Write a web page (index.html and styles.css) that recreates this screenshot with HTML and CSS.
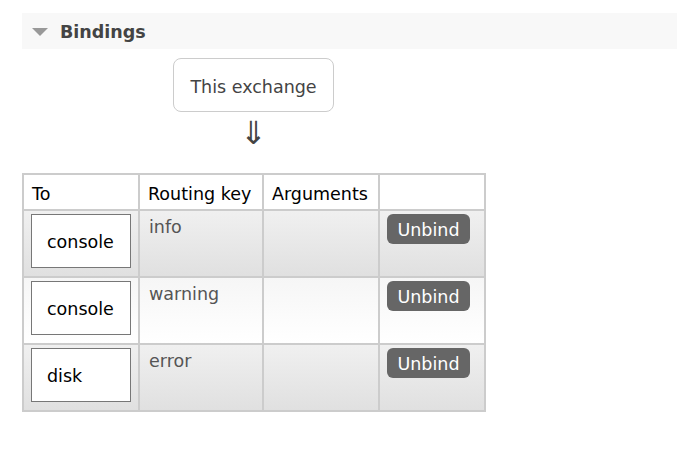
FILE: index.html
```html
<!DOCTYPE html>
<html>
<head>
<meta charset="utf-8">
<link rel="stylesheet" href="styles.css">
</head>
<body>
<div class="section">
  <h2 class="section-title"><span class="toggle"></span><span class="title-text">Bindings</span></h2>
  <div class="source">
    <div class="exchange-box">This exchange</div>
    <div class="arrow">&#8659;</div>
  </div>
  <table class="list">
    <thead>
      <tr>
        <th class="c-to">To</th>
        <th class="c-key">Routing key</th>
        <th class="c-args">Arguments</th>
        <th class="c-act"></th>
      </tr>
    </thead>
    <tbody>
      <tr class="alt1">
        <td><div class="queue-box">console</div></td>
        <td class="key">info</td>
        <td></td>
        <td><button class="btn">Unbind</button></td>
      </tr>
      <tr class="alt2">
        <td><div class="queue-box">console</div></td>
        <td class="key">warning</td>
        <td></td>
        <td><button class="btn">Unbind</button></td>
      </tr>
      <tr class="alt1">
        <td><div class="queue-box">disk</div></td>
        <td class="key">error</td>
        <td></td>
        <td><button class="btn">Unbind</button></td>
      </tr>
    </tbody>
  </table>
</div>
</body>
</html>
```

FILE: styles.css
```css
html, body {
  margin: 0;
  padding: 0;
  background: #fff;
}
body {
  font-family: "DejaVu Sans", Verdana, sans-serif;
  font-size: 17.5px;
  color: #000;
}
.section {
  padding: 13px 0 0 22px;
}
.section-title {
  margin: 0;
  height: 36px;
  background: #f8f8f8;
  display: flex;
  align-items: center;
  font-size: 17.5px;
  font-weight: bold;
  color: #444;
  padding-left: 10px;
}
.title-text {
  padding-top: 2px;
}
.toggle {
  width: 0;
  height: 0;
  border-left: 8px solid transparent;
  border-right: 8px solid transparent;
  border-top: 8px solid #999;
  margin-right: 12px;
  margin-top: 2px;
}
.source {
  width: 161px;
  margin: 9px 0 0 151px;
  display: flex;
  flex-direction: column;
  align-items: center;
}
.exchange-box {
  box-sizing: border-box;
  width: 161px;
  height: 54px;
  border: 1px solid #ccc;
  border-radius: 8px;
  display: flex;
  align-items: center;
  justify-content: center;
  padding-top: 3px;
  color: #444;
}
.arrow {
  font-size: 32px;
  line-height: 34px;
  height: 34px;
  margin-top: 4px;
  color: #444;
}
table.list {
  margin-top: 23px;
  border-collapse: separate;
  border-spacing: 2px;
  background: #ccc;
  width: 464px;
}
table.list th {
  background: #fff;
  font-weight: normal;
  text-align: left;
  height: 34px;
  padding: 3px 0 0 8px;
  box-sizing: border-box;
  vertical-align: middle;
}
.c-to { width: 114px; }
.c-key { width: 122px; }
.c-args { width: 114px; }
.c-act { width: 104px; }
table.list td {
  height: 65px;
  padding: 3px 6px 0 7px;
  box-sizing: border-box;
  vertical-align: top;
}
tr.alt1 td {
  background: linear-gradient(#f0f0f0, #e0e0e0);
}
tr.alt2 td {
  background: linear-gradient(#f6f6f6, #fff);
}
table.list td.key {
  color: #555;
  padding-left: 9px;
  padding-top: 6px;
}
.queue-box {
  box-sizing: border-box;
  width: 100px;
  height: 54px;
  border: 1px solid #777;
  background: #fff;
  display: flex;
  align-items: center;
  padding-left: 15px;
  padding-top: 2px;
}
.btn {
  font-family: inherit;
  font-size: 17.5px;
  color: #fff;
  background: #666;
  border: none;
  border-radius: 6px;
  width: 83px;
  height: 30px;
  padding: 2px 0 0 0;
  margin: 0;
  line-height: 28px;
}
```
